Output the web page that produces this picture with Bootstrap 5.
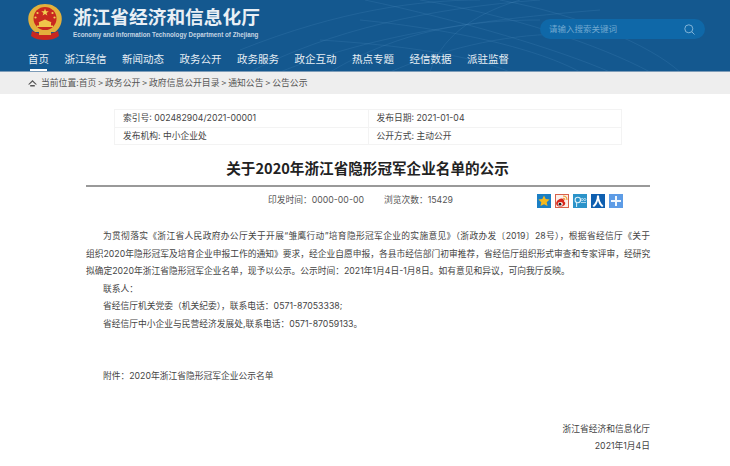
<!DOCTYPE html>
<html lang="zh-CN">
<head>
    <meta charset="UTF-8">
    <title>关于2020年浙江省隐形冠军企业名单的公示</title>
    <link href="https://cdn.jsdelivr.net/npm/bootstrap@5.3.0/dist/css/bootstrap.min.css" rel="stylesheet">
    <style>
        body {
            background: #fff;
            color: #444;
            font-family: Inter, "Noto Sans CJK SC", sans-serif;
            font-size: 8.75px;
            overflow: hidden;
        }
        .site-top {
            position: relative;
            height: 72px;
            background: #14588f;
            border-bottom: 1px solid #7d9cb8;
            overflow: hidden;
        }
        .top-lines {
            position: absolute;
            left: 0;
            top: 0;
        }
        .top-inner {
            position: relative;
            height: 44px;
            padding: 4px 25px 0 28px;
        }
        .site-mark {
            margin-right: 11px;
        }
        .site-name {
            color: #e9eff5;
            font-family: "Noto Sans CJK SC", sans-serif;
            font-size: 18.7px;
            font-weight: 700;
            line-height: 24px;
        }
        .site-en {
            color: #c5d5e3;
            font-family: "Liberation Sans", sans-serif;
            font-size: 6.27px;
            font-weight: 700;
            line-height: 8px;
            margin-top: 3px;
        }
        .search-pill {
            width: 165px;
            height: 20px;
            margin-top: 15px;
            padding: 0 10px 0 9px;
            background: #0f68a8;
            border-radius: 10px;
            color: #72a9d0;
            font-size: 8.5px;
        }
        .main-menu {
            position: relative;
            gap: 15.5px;
            padding-left: 28px;
        }
        .main-menu a {
            position: relative;
            display: block;
            height: 27px;
            color: #e8eff5;
            font-family: "Noto Sans CJK SC", sans-serif;
            font-size: 10.5px;
            line-height: 29px;
            text-decoration: none;
        }
        .main-menu a.here::after {
            content: "";
            position: absolute;
            left: 2px;
            right: 2px;
            bottom: 0;
            height: 2px;
            background: #fff;
        }
        .crumbs {
            height: 22px;
            padding-left: 28px;
            background: #eee;
            color: #555;
            font-family: "Noto Sans CJK SC", sans-serif;
            font-size: 8.8px;
        }
        .info-box {
            width: 508px;
            margin: 15px 0 0 114px;
            border: 1px solid #f1f1f1;
            color: #444;
        }
        .info-box td {
            width: 50%;
            height: 17.5px;
            padding: 0 8px;
            border: 1px solid #f3f3f3;
            line-height: 16px;
        }
        .info-box td + td {
            width: 254px;
        }
        .doc-title {
            margin: 13px 0 0;
            color: #222;
            font-family: "Noto Sans CJK SC", sans-serif;
            font-size: 14.6px;
            font-weight: 700;
            line-height: 19px;
            text-align: center;
            width: 735px;
        }
        .doc-wrap {
            width: 564px;
            margin-left: 86px;
        }
        .doc-rule {
            height: 2px;
            margin-top: 8px;
            background: #999;
        }
        .doc-meta {
            height: 28px;
            color: #555;
        }
        .meta-text {
            margin-left: 182px;
            gap: 20px;
        }
        .share-row {
            gap: 4px;
            margin-right: 27px;
        }
        .doc-body {
            margin-top: 13px;
            line-height: 17.5px;
            color: #444;
        }
        .doc-body p {
            margin: 0;
            text-indent: 17px;
        }
        .doc-body p.sign {
            text-align: right;
        }
        .fit-line {
            display: block;
            height: 17.5px;
            white-space: nowrap;
            text-align: justify;
            text-align-last: justify;
        }
        .doc-lead {
            text-indent: 0 !important;
        }
        .doc-lead .first-line {
            padding-left: 17px;
        }
        .tail-gap {
            height: 35px;
        }
    </style>
</head>
<body>
    <header class="site-top">
        <svg class="top-lines" width="730" height="72" viewBox="0 0 730 72" fill="none" stroke="#4a8aba" stroke-opacity=".4" stroke-width=".6">
            <path d="M250 72C330 30 430 8 540 0"/>
            <path d="M280 72C360 40 450 22 600 10"/>
            <path d="M240 50C340 10 420 0 480 0"/>
            <path d="M365 0C460 20 560 50 610 72"/>
            <path d="M420 0C510 15 600 45 650 72"/>
            <path d="M500 0C580 15 650 45 680 72"/>
            <path d="M360 20C460 30 540 50 580 72"/>
            <path d="M320 40C400 45 470 55 510 72"/>
            <path d="M430 72C440 40 470 15 520 0"/>
            <path d="M330 72C400 30 470 20 540 20"/>
            <path d="M390 72C440 50 500 35 560 34"/>
        </svg>
        <div class="top-inner d-flex">
            <svg width="34" height="36" viewBox="0 0 34 36" class="site-mark flex-shrink-0">
                <path d="M7 28C1 24-1 16 1 10 4 3 10 0 17 0s13 3 16 10c2 6 0 14-6 18z" fill="#e3b13c"/>
                <circle cx="17" cy="14.500" r="11.500" fill="#c9281f"/>
                <path d="M17 4.500l1 2.700h2.800l-2.300 1.700.9 2.700-2.400-1.700-2.400 1.700.9-2.700-2.300-1.700H16z" fill="#f2cf52"/>
                <g fill="#f2cf52">
                    <circle cx="9.500" cy="9" r="1.100"/>
                    <circle cx="24.500" cy="9" r="1.100"/>
                    <circle cx="7.500" cy="13.500" r="1.100"/>
                    <circle cx="26.500" cy="13.500" r="1.100"/>
                </g>
                <path d="M9 23v-1.500h2v-3H10l7-3 7 3h-1v3h2V23z" fill="#f0c64a"/>
                <path d="M4 27c4 2 8 3 13 3s9-1 13-3l1 5c-4 3-9 4-14 4S7 35 3 32z" fill="#c9281f"/>
                <path d="M11 27h12v4H11z" fill="#e3b13c"/>
            </svg>
            <div class="flex-grow-1">
                <div class="site-name">浙江省经济和信息化厅</div>
                <div class="site-en">Economy and Information Technology Department of Zhejiang</div>
            </div>
            <div class="search-pill d-flex align-items-center justify-content-between">
                <span>请输入搜索关键词</span>
                <svg width="11" height="11" viewBox="0 0 11 11" fill="none" stroke="#8fbcdc" stroke-width=".9">
                    <circle cx="4.800" cy="4.800" r="4"/>
                    <path d="M7.700 7.700L10.500 10.500"/>
                </svg>
            </div>
        </div>
        <nav class="main-menu d-flex">
            <a class="here" href="#">首页</a>
            <a href="#">浙江经信</a>
            <a href="#">新闻动态</a>
            <a href="#">政务公开</a>
            <a href="#">政务服务</a>
            <a href="#">政企互动</a>
            <a href="#">热点专题</a>
            <a href="#">经信数据</a>
            <a href="#">派驻监督</a>
        </nav>
    </header>

    <div class="crumbs d-flex align-items-center">
        <svg width="9" height="7" viewBox="0 0 9 7" class="me-1 flex-shrink-0" fill="#555">
            <path d="M4.500 0L9 4.500H7.500L4.500 1.800 1.500 4.500H0zM2.200 5h4.600v1.500H2.200z"/>
        </svg>
        <span>当前位置:首页 &gt; 政务公开 &gt; 政府信息公开目录 &gt; 通知公告 &gt; 公告公示</span>
    </div>

    <table class="info-box">
        <tr>
            <td>索引号: 002482904/2021-00001</td>
            <td>发布日期: 2021-01-04</td>
        </tr>
        <tr>
            <td>发布机构: 中小企业处</td>
            <td>公开方式: 主动公开</td>
        </tr>
    </table>

    <h1 class="doc-title">关于2020年浙江省隐形冠军企业名单的公示</h1>

    <main class="doc-wrap">
        <div class="doc-rule"></div>
        <div class="doc-meta d-flex align-items-center justify-content-between">
            <div class="meta-text d-flex">
                <span>印发时间：0000-00-00</span>
                <span>浏览次数：15429</span>
            </div>
            <div class="share-row d-flex">
                <svg width="14" height="14" viewBox="0 0 14 14"><rect width="14" height="14" fill="#1b7fc4"/><path d="M7 1.500l1.700 3.600 3.900.5-2.900 2.600.8 3.900L7 10.200l-3.500 1.900.8-3.900L1.400 5.600l3.900-.5z" fill="#f5b91e"/></svg>
                <svg width="14" height="14" viewBox="0 0 14 14"><rect width="14" height="14" fill="#fbeee8"/><rect x=".5" y=".5" width="13" height="13" fill="none" stroke="#d8604a"/><path d="M6.500 4.500C3 5 .8 7.800 1.200 10c.4 2.200 3.400 3 5.800 2.400 2.400-.6 3.600-2.100 3.200-3.600-.2-.8-1.100-1-1.100-1s.5-1.500-.4-2.200C8.100 5 7.300 4.200 6.500 4.500z" fill="#d8261c"/><ellipse cx="5.300" cy="10" rx="2.600" ry="1.900" fill="#fff"/><circle cx="5" cy="10.200" r="1.400" fill="#222"/><path d="M8 2c2.400 0 4 1.600 4 4M8 4.200c1.200 0 1.900.7 1.900 1.900" fill="none" stroke="#ee9a2c" stroke-width="1.100"/></svg>
                <svg width="14" height="14" viewBox="0 0 14 14"><rect width="14" height="14" fill="#2b93c9"/><circle cx="4.800" cy="6" r="2.700" fill="none" stroke="#dff1fa" stroke-width="1.100"/><path d="M3.600 8.500V13" stroke="#dff1fa"/><circle cx="9.200" cy="5.500" r="1.100" fill="none" stroke="#dff1fa" stroke-width=".7"/><circle cx="11.800" cy="5.500" r="1.100" fill="none" stroke="#dff1fa" stroke-width=".7"/><path d="M8 8.500h5" stroke="#dff1fa" stroke-width=".7"/></svg>
                <svg width="14" height="14" viewBox="0 0 14 14"><rect width="14" height="14" fill="#0e5fb0"/><path d="M6 1.500h2c0 4 1.500 7.500 4.500 10.500l-1.500 1C9 11.500 7.500 9 7 6.500 6.500 9 5 11.500 3 13l-1.500-1C4.500 9 6 5.500 6 1.500z" fill="#fff"/></svg>
                <svg width="14" height="14" viewBox="0 0 14 14"><rect width="14" height="14" fill="#5d9ce6"/><path d="M6 2h2v4h4v2H8v4H6V8H2V6h4z" fill="#f1f7fd"/></svg>
            </div>
        </div>
        <div class="doc-body">
            <p class="doc-lead">
                <span class="fit-line first-line">为贯彻落实《浙江省人民政府办公厅关于开展“雏鹰行动”培育隐形冠军企业的实施意见》（浙政办发〔2019〕28号），根据省经信厅《关于</span>
                <span class="fit-line">组织2020年隐形冠军及培育企业申报工作的通知》要求，经企业自愿申报，各县市经信部门初审推荐，省经信厅组织形式审查和专家评审，经研究</span>
                拟确定2020年浙江省隐形冠军企业名单，现予以公示。公示时间：2021年1月4日-1月8日。如有意见和异议，可向我厅反映。
            </p>
            <p>联系人：</p>
            <p>省经信厅机关党委（机关纪委），联系电话：0571-87053338;</p>
            <p>省经信厅中小企业与民营经济发展处,联系电话：0571-87059133。</p>
            <p>&nbsp;</p>
            <p>&nbsp;</p>
            <p>附件：2020年浙江省隐形冠军企业公示名单</p>
            <div class="tail-gap"></div>
            <p class="sign">浙江省经济和信息化厅</p>
            <p class="sign">2021年1月4日</p>
        </div>
    </main>
    <script src="https://cdn.jsdelivr.net/npm/bootstrap@5.3.0/dist/js/bootstrap.bundle.min.js"></script>
</body>
</html>
